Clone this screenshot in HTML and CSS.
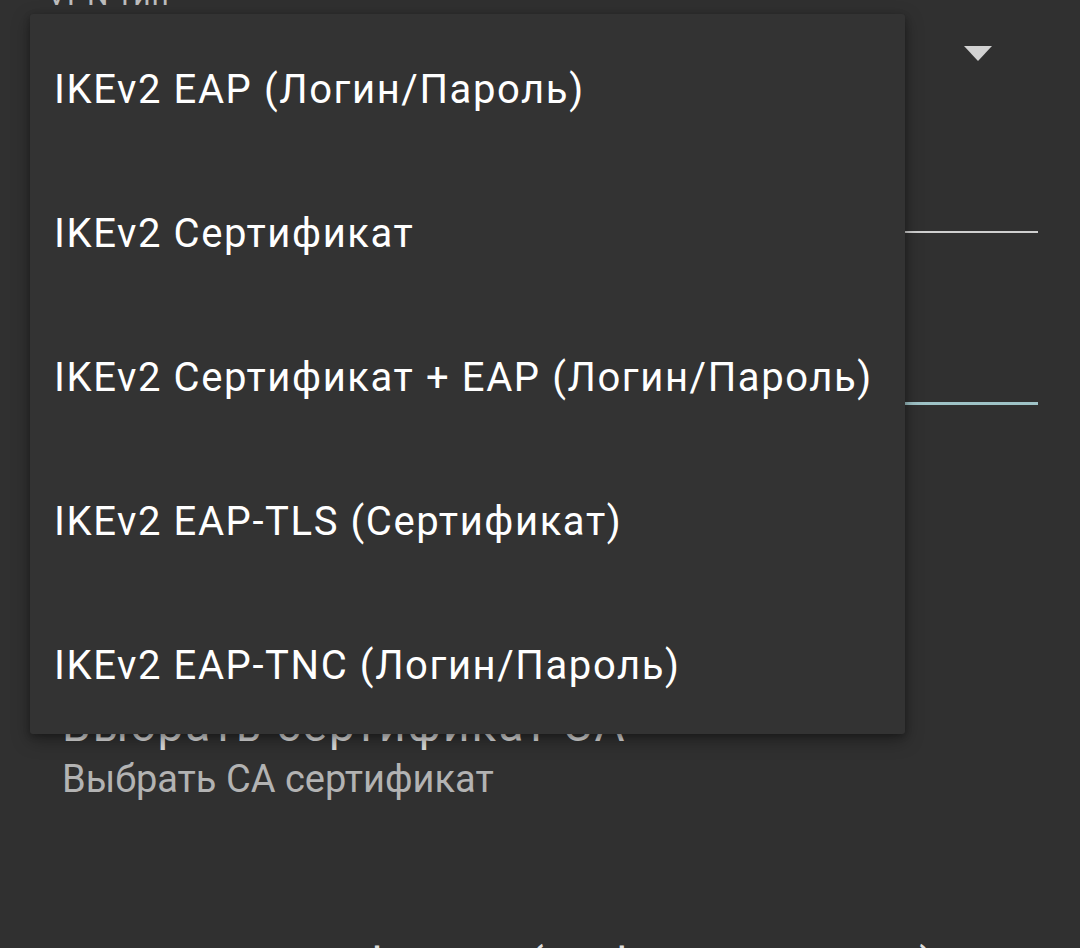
FILE: index.html
```html
<!DOCTYPE html>
<html lang="ru">
<head>
<meta charset="utf-8">
<title>VPN</title>
<link rel="stylesheet" href="styles.css">
</head>
<body>
<div class="screen">
  <div class="page">
    <div class="field-label">VPN тип</div>
    <div class="spinner-row">
      <span class="spinner-value">IKEv2 EAP (Логин/Пароль)</span>
      <span class="arrow"></span>
    </div>
    <div class="edit">
      <span class="edit-text">Сервер</span>
      <div class="underline"></div>
    </div>
    <div class="edit edit-focused">
      <span class="edit-text">Логин</span>
      <div class="underline"></div>
    </div>
    <div class="pref">
      <div class="pref-title">Выбрать сертификат CA</div>
      <div class="pref-summary">Выбрать CA сертификат</div>
    </div>
    <div class="pref pref-second">
      <div class="pref-title">Импорт сертификата (из файла PKCS12)</div>
    </div>
  </div>

  <div class="popup">
    <div class="item">IKEv2 EAP (Логин/Пароль)</div>
    <div class="item">IKEv2 Сертификат</div>
    <div class="item">IKEv2 Сертификат + EAP (Логин/Пароль)</div>
    <div class="item">IKEv2 EAP-TLS (Сертификат)</div>
    <div class="item">IKEv2 EAP-TNC (Логин/Пароль)</div>
  </div>
</div>
</body>
</html>
```

FILE: styles.css
```css
* { box-sizing: border-box; }
html, body {
  margin: 0;
  padding: 0;
  background: #303030;
}
body {
  width: 1080px;
  height: 948px;
  overflow: hidden;
  font-family: Roboto, "Noto Sans", sans-serif;
}
.screen {
  position: relative;
  width: 1080px;
  height: 948px;
  overflow: hidden;
}
.page {
  display: flex;
  flex-direction: column;
  padding: 0 42px 0 47px;
  margin-top: -25px;
}
.field-label {
  font-size: 30px;
  line-height: 40px;
  height: 40px;
  color: #bdbdbd;
  letter-spacing: 1px;
}
.spinner-row {
  display: flex;
  align-items: center;
  justify-content: space-between;
  height: 83px;
  color: #ffffff;
  font-size: 40px;
  padding-left: 15px;
}
.arrow {
  width: 0;
  height: 0;
  border-left: 14px solid transparent;
  border-right: 14px solid transparent;
  border-top: 15px solid #d2d2d2;
  margin-right: 46px;
  margin-bottom: 7px;
}
.edit {
  display: flex;
  flex-direction: column;
  justify-content: flex-end;
  height: 135px;
  padding-left: 15px;
}
.edit-text {
  font-size: 40px;
  color: #8a8a8a;
  margin-bottom: 22px;
}
.underline {
  height: 2px;
  background: #cfcfcf;
  margin-left: -15px;
}
.edit-focused {
  height: 172px;
}
.edit-focused .underline {
  height: 3px;
  background: #9fc3c7;
}
.pref {
  display: flex;
  flex-direction: column;
  padding-left: 15px;
}
.pref-title {
  font-size: 46px;
  line-height: 52px;
  letter-spacing: 2px;
  color: #dcdcdc;
  margin-top: 294px;
  white-space: nowrap;
}
.pref-summary {
  font-size: 38px;
  line-height: 46px;
  color: #b3b3b3;
  margin-top: 5px;
}
.pref-second .pref-title {
  margin-top: 137px;
  letter-spacing: 0;
}
.popup {
  position: absolute;
  left: 30px;
  top: 14px;
  width: 875px;
  height: 720px;
  background: #333333;
  border-radius: 3px;
  box-shadow: 0 6px 18px rgba(0,0,0,0.35), 0 2px 6px rgba(0,0,0,0.25);
  padding-top: 3px;
  display: flex;
  flex-direction: column;
  overflow: hidden;
}
.item {
  flex: 0 0 144px;
  display: flex;
  align-items: center;
  padding-left: 24px;
  font-size: 40px;
  letter-spacing: 1.6px;
  color: #ffffff;
  white-space: nowrap;
}
```
